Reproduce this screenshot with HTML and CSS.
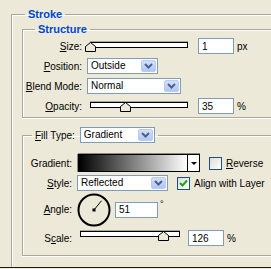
FILE: index.html
```html
<!DOCTYPE html>
<html lang="en">
<head>
    <meta charset="UTF-8">
    <title>Layer Style - Stroke</title>
    <link rel="stylesheet" href="styles.css">
</head>
<body>
    <div class="window">
        <fieldset class="group outer">
            <legend class="title">Stroke</legend>

            <fieldset class="group structure">
                <legend class="title">Structure</legend>

                <div class="row">
                    <label class="lbl"><u>S</u>ize:</label>
                    <div class="slider">
                        <div class="track"></div>
                        <svg class="thumb" style="left: -1px" width="11" height="10" viewBox="0 0 11 10"><polygon points="0.5,4.5 5.5,0.5 10.5,4.5 10.5,9.5 0.5,9.5" fill="#ECE9D8" stroke="#000"/></svg>
                    </div>
                    <input class="field" type="text" value="1">
                    <span class="unit">px</span>
                </div>

                <div class="row">
                    <label class="lbl"><u>P</u>osition:</label>
                    <div class="combo combo-pos">
                        <span class="txt">Outside</span>
                        <span class="arrow"><svg width="9" height="6" viewBox="0 0 9 6"><polyline points="1,1 4.5,4.5 8,1" fill="none" stroke="#4D6185" stroke-width="2"/></svg></span>
                    </div>
                </div>

                <div class="row">
                    <label class="lbl"><u>B</u>lend Mode:</label>
                    <div class="combo combo-blend">
                        <span class="txt">Normal</span>
                        <span class="arrow"><svg width="9" height="6" viewBox="0 0 9 6"><polyline points="1,1 4.5,4.5 8,1" fill="none" stroke="#4D6185" stroke-width="2"/></svg></span>
                    </div>
                </div>

                <div class="row">
                    <label class="lbl"><u>O</u>pacity:</label>
                    <div class="slider">
                        <div class="track"></div>
                        <svg class="thumb" style="left: 34px" width="11" height="10" viewBox="0 0 11 10"><polygon points="0.5,4.5 5.5,0.5 10.5,4.5 10.5,9.5 0.5,9.5" fill="#ECE9D8" stroke="#000"/></svg>
                    </div>
                    <input class="field" type="text" value="35">
                    <span class="unit">%</span>
                </div>
            </fieldset>

            <fieldset class="group fill">
                <legend class="fill-legend">
                    <label><u>F</u>ill Type:</label>
                    <div class="combo combo-fill">
                        <span class="txt">Gradient</span>
                        <span class="arrow"><svg width="9" height="6" viewBox="0 0 9 6"><polyline points="1,1 4.5,4.5 8,1" fill="none" stroke="#4D6185" stroke-width="2"/></svg></span>
                    </div>
                </legend>

                <div class="row row-grad">
                    <label class="lbl">Gradient:</label>
                    <div class="gradient">
                        <div class="ramp"></div>
                        <div class="drop"><span class="tri"></span></div>
                    </div>
                    <span class="check check-rev"></span>
                    <span class="check-text"><u>R</u>everse</span>
                </div>

                <div class="row row-style">
                    <label class="lbl"><u>S</u>tyle:</label>
                    <div class="combo combo-style">
                        <span class="txt">Reflected</span>
                        <span class="arrow"><svg width="9" height="6" viewBox="0 0 9 6"><polyline points="1,1 4.5,4.5 8,1" fill="none" stroke="#4D6185" stroke-width="2"/></svg></span>
                    </div>
                    <span class="check check-align"><svg width="11" height="11" viewBox="0 0 11 11"><polyline points="2,5 4.5,7.5 9,2.5" fill="none" stroke="#21A121" stroke-width="2"/></svg></span>
                    <span class="check-text">Align with Layer</span>
                </div>

                <div class="row row-angle">
                    <label class="lbl"><u>A</u>ngle:</label>
                    <svg class="dial" width="34" height="34" viewBox="0 0 34 34">
                        <circle cx="17" cy="17" r="15.5" fill="none" stroke="#000" stroke-width="2"/>
                        <line x1="17" y1="17" x2="24.5" y2="7.7" stroke="#000" stroke-width="1"/>
                        <rect x="15.5" y="15.5" width="3" height="3" fill="#000"/>
                    </svg>
                    <input class="field field-angle" type="text" value="51">
                    <span class="deg">°</span>
                </div>

                <div class="row row-scale">
                    <label class="lbl">S<u>c</u>ale:</label>
                    <div class="slider slider-scale">
                        <div class="track"></div>
                        <svg class="thumb" style="left: 82px" width="11" height="10" viewBox="0 0 11 10"><polygon points="0.5,4.5 5.5,0.5 10.5,4.5 10.5,9.5 0.5,9.5" fill="#ECE9D8" stroke="#000"/></svg>
                    </div>
                    <input class="field field-scale" type="text" value="126">
                    <span class="unit">%</span>
                </div>
            </fieldset>
        </fieldset>
    </div>
</body>
</html>
```

FILE: styles.css
```css
* {
    box-sizing: border-box;
}
body {
    margin: 0;
    background-color: #ECE9D8;
    font-family: "Liberation Sans", Arial, sans-serif;
    font-size: 10px;
    color: #000;
    overflow: hidden;
}
.window {
    width: 271px;
    height: 268px;
    padding-top: 8px;
    overflow: hidden;
    border-bottom: 1px solid #1a1a1a;
}

/* etched group boxes, open on the right */
.group {
    margin: 0;
    padding: 0;
    min-width: 0;
    border: 0;
    border-top: 1px solid #ACA899;
    border-left: 1px solid #ACA899;
    box-shadow: inset 1px 1px 0 #fff;
}
.outer {
    margin: 0 -40px 0 11px;
    padding-top: 2px;
    height: 320px;
}
.title {
    margin-left: 13px;
    padding: 0 3px;
    font-size: 11px;
    font-weight: bold;
    line-height: 13px;
    color: #0046D5;
}
.structure {
    margin: 0 -40px 0 10px;
    padding: 2px 0 3px 0;
    border-bottom: 1px solid #ACA899;
    box-shadow: inset 1px 1px 0 #fff, 0 1px 0 #fff;
}
.structure .title {
    margin-left: 12px;
}
.fill {
    margin: 9px -40px 0 10px;
    padding: 11px 0 9px 0;
    border-bottom: 1px solid #ACA899;
    box-shadow: inset 1px 1px 0 #fff, 0 1px 0 #fff;
}
.fill-legend {
    display: flex;
    align-items: center;
    gap: 5px;
    margin-left: 9px;
    padding: 0 3px;
    height: 16px;
}

/* rows */
.row {
    display: flex;
    align-items: center;
    height: 16px;
    margin-bottom: 4px;
}
.row:last-child {
    margin-bottom: 0;
}
.lbl {
    width: 59px;
    text-align: right;
    flex-shrink: 0;
}
.fill .lbl {
    width: 49px;
}
.row-grad {
    height: 18px;
    margin-bottom: 3px;
}
.row-style {
    margin-bottom: 2px;
}
.row-angle {
    height: 33px;
    margin-bottom: 4px;
}

/* sliders */
.slider {
    position: relative;
    width: 106px;
    height: 16px;
    margin-left: 4px;
    padding: 4px 4px 0 4px;
}
.structure .row:first-child .slider {
    padding-top: 5px;
}
.slider-scale {
    width: 108px;
    padding-top: 1px;
}
.track {
    height: 6px;
    background: #fff;
    border: 1px solid #000;
    box-shadow: 0 -1px 0 #ACA899;
}
.thumb {
    position: absolute;
    top: 4px;
}
.structure .row:first-child .thumb {
    top: 5px;
}
.slider-scale .thumb {
    top: 1px;
}

/* text fields */
.field {
    width: 36px;
    height: 16px;
    margin: 0 0 0 6px;
    padding: 0 3px;
    border: 1px solid #7F9DB9;
    background: #fff;
    font-family: inherit;
    font-size: 10px;
    line-height: 14px;
    color: #000;
    outline: none;
}
.field-angle {
    width: 43px;
    margin-left: 4px;
}
.field-scale {
    margin-left: 4px;
}
.unit {
    margin-left: 3px;
}
.deg {
    align-self: flex-start;
    margin: 6px 0 0 2px;
    font-size: 9px;
}

/* combo boxes */
.combo {
    display: flex;
    align-items: center;
    height: 16px;
    padding: 1px;
    border: 1px solid #7F9DB9;
    background: #fff;
    margin-left: 5px;
}
.combo .txt {
    flex: 1;
    padding-left: 2px;
    line-height: 14px;
    white-space: nowrap;
}
.arrow {
    display: flex;
    align-items: center;
    justify-content: center;
    width: 15px;
    height: 12px;
    border: 1px solid #B9CBF3;
    border-radius: 2px;
    background: linear-gradient(#D3DFFC, #B2C6F5);
}
.combo-pos {
    width: 71px;
}
.combo-blend {
    width: 94px;
}
.combo-fill {
    width: 75px;
    margin-left: 0;
}
.combo-style {
    width: 91px;
}

/* gradient swatch */
.gradient {
    display: flex;
    width: 122px;
    height: 18px;
    margin-left: 6px;
    border: 1px solid #000;
    box-shadow: 0 -1px 0 #8a8a8a, -1px 0 0 #8a8a8a;
}
.ramp {
    flex: 1;
    background: linear-gradient(to right, #000, #fff);
}
.drop {
    display: flex;
    align-items: center;
    justify-content: center;
    width: 12px;
    border-left: 1px solid #000;
    background: #fff;
}
.tri {
    width: 0;
    height: 0;
    border-left: 3px solid transparent;
    border-right: 3px solid transparent;
    border-top: 3px solid #000;
}

/* check boxes */
.check {
    display: flex;
    align-items: center;
    justify-content: center;
    width: 13px;
    height: 13px;
    border: 1px solid #1C5180;
    background: linear-gradient(135deg, #DCDCD7, #fff);
}
.check-rev {
    margin-left: 9px;
}
.check-align {
    margin-left: 9px;
}
.check-text {
    margin-left: 4px;
    white-space: nowrap;
}
.dial {
    margin-left: 5px;
}
```
